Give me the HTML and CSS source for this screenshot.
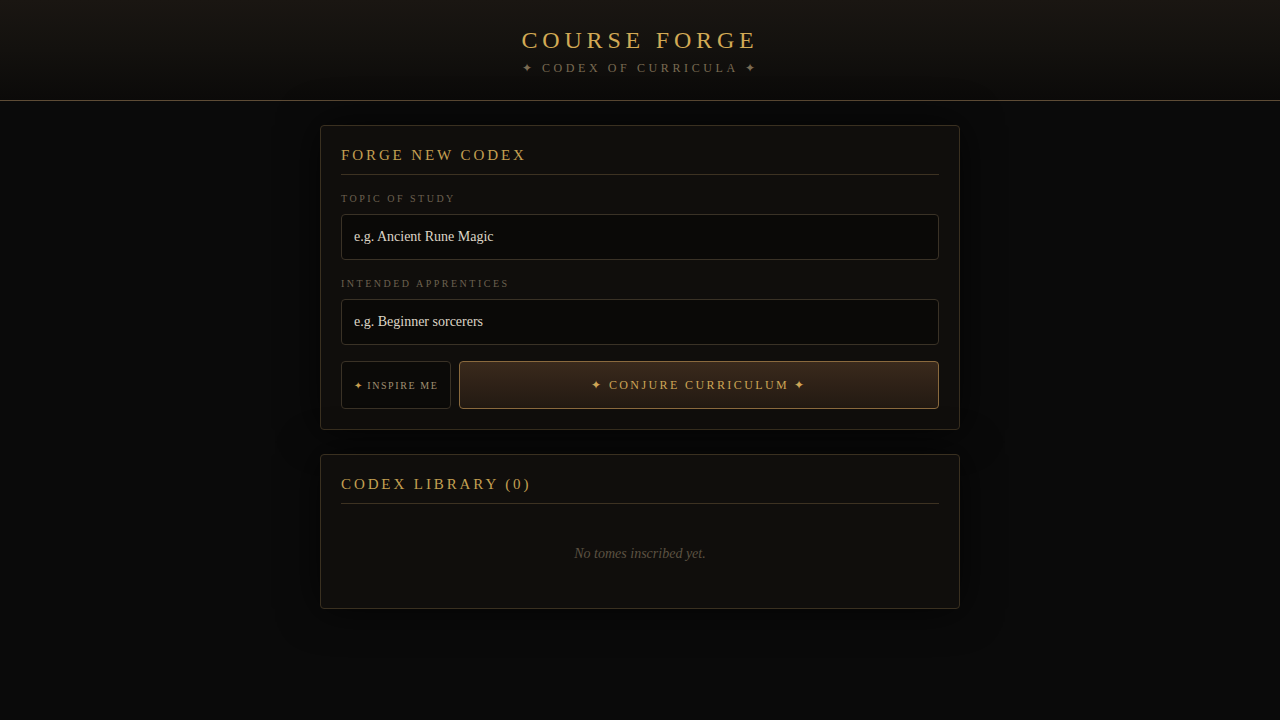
FILE: index.html
```html
<!DOCTYPE html>
<html lang="en">
<head>
<meta charset="utf-8">
<title>Course Forge</title>
<link rel="stylesheet" href="styles.css">
</head>
<body>
<header class="site-header">
  <h1 class="site-title">COURSE FORGE</h1>
  <p class="site-subtitle">✦ CODEX OF CURRICULA ✦</p>
</header>
<main class="main">
  <section class="card">
    <h2 class="card-title">FORGE NEW CODEX</h2>
    <label class="field-label" for="topic">TOPIC OF STUDY</label>
    <input class="field-input" id="topic" type="text" placeholder="e.g. Ancient Rune Magic">
    <label class="field-label" for="audience">INTENDED APPRENTICES</label>
    <input class="field-input" id="audience" type="text" placeholder="e.g. Beginner sorcerers">
    <div class="actions">
      <button class="btn btn-ghost" type="button">✦ INSPIRE ME</button>
      <button class="btn btn-primary" type="button">✦ CONJURE CURRICULUM ✦</button>
    </div>
  </section>
  <section class="card">
    <h2 class="card-title">CODEX LIBRARY (0)</h2>
    <p class="empty">No tomes inscribed yet.</p>
  </section>
</main>
</body>
</html>
```

FILE: styles.css
```css
* { box-sizing: border-box; }
html, body { margin: 0; padding: 0; }
body {
  background: #0a0a0a;
  font-family: "Liberation Serif", "Times New Roman", serif;
  color: #d8cfbd;
  min-height: 720px;
}
.site-header {
  height: 101px;
  background: linear-gradient(to bottom, #1a1612 0%, #13110e 50%, #0b0a09 100%);
  border-bottom: 1px solid #5e4c36;
  display: flex;
  flex-direction: column;
  align-items: center;
  padding-top: 27px;
}
.site-title {
  margin: 0;
  font-weight: normal;
  font-size: 24px;
  line-height: 26px;
  letter-spacing: 4.8px;
  color: #d2aa55;
}
.site-subtitle {
  margin: 8px 0 0;
  font-size: 12px;
  line-height: 14px;
  letter-spacing: 3.6px;
  color: #7a6b52;
}
.main {
  display: flex;
  flex-direction: column;
  align-items: center;
  gap: 24px;
  padding-top: 24px;
}
.card {
  width: 640px;
  background: #100e0c;
  border: 1px solid #3a3020;
  border-radius: 4px;
  padding: 20px;
  display: flex;
  flex-direction: column;
  box-shadow: 0 0 40px rgba(0, 0, 0, 0.7);
}
.card-title {
  margin: 0;
  font-weight: normal;
  font-size: 15px;
  line-height: 18px;
  letter-spacing: 2.9px;
  color: #c4a052;
  padding-bottom: 10px;
  border-bottom: 1px solid #3d3222;
}
.field-label {
  margin-top: 17px;
  font-size: 10px;
  line-height: 14px;
  letter-spacing: 2.5px;
  color: #6d6150;
}
.field-input {
  margin-top: 8px;
  height: 46px;
  background: #0a0907;
  border: 1px solid #3a3226;
  border-radius: 4px;
  padding: 0 12px;
  font-family: "Liberation Serif", "Times New Roman", serif;
  font-size: 14px;
  color: #ddd5c6;
  outline: none;
}
.field-input::placeholder { color: #ddd5c6; opacity: 1; }
.actions {
  margin-top: 16px;
  display: flex;
  gap: 8px;
}
.btn {
  height: 48px;
  border-radius: 4px;
  font-family: "Liberation Serif", "Times New Roman", serif;
  cursor: pointer;
}
.btn-ghost {
  width: 110px;
  background: #0b0a08;
  border: 1px solid #3a3226;
  font-size: 10px;
  letter-spacing: 1.6px;
  color: #a08f70;
  padding: 0;
}
.btn-ghost::first-letter { color: #c9a050; }
.btn-primary {
  flex: 1;
  background: linear-gradient(to bottom, #3a2a1c 0%, #2e2117 50%, #231a12 100%);
  border: 1px solid #8a6a3e;
  font-size: 12px;
  letter-spacing: 2.4px;
  color: #cda556;
}
.empty {
  margin: 0;
  padding: 40px 0 24px;
  text-align: center;
  font-style: italic;
  font-size: 14px;
  line-height: 20px;
  color: #5c5242;
}
```
